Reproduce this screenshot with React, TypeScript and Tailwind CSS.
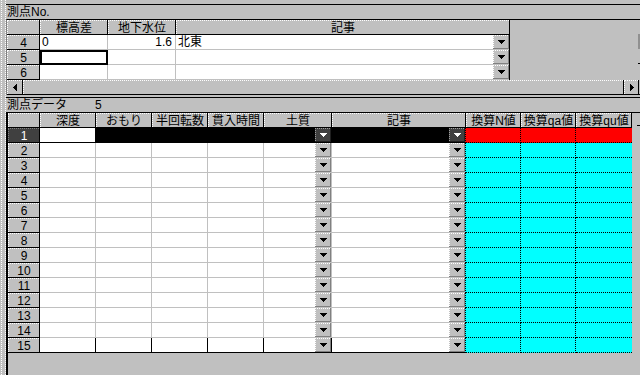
const FONT = "font-['Liberation_Sans','Noto_Sans_CJK_JP',sans-serif]";

function DownArrow({ light }: { light?: boolean }) {
  const c = light ? "bg-white" : "bg-black";
  return (
    <div className="flex flex-col items-center">
      <div className={`h-px w-[7px] ${c}`} />
      <div className={`h-px w-[5px] ${c}`} />
      <div className={`h-px w-[3px] ${c}`} />
      <div className={`h-px w-px ${c}`} />
    </div>
  );
}

function SideArrow({ dir }: { dir: "left" | "right" }) {
  const bars = ["h-px", "h-[3px]", "h-[5px]", "h-[7px]"];
  const list = dir === "left" ? bars : [...bars].reverse();
  return (
    <div className="flex items-center">
      {list.map(h => <div key={h} className={`w-px ${h} bg-black`} />)}
    </div>
  );
}

function DropBtn({ dark }: { dark?: boolean }) {
  return (
    <div className={`w-[16px] h-full border-r border-b ${dark ? "bg-[#404040] border-[#202020]" : "bg-[#c0c0c0] border-[#808080]"}`}>
      <div className={`h-full border-t border-l border-dotted ${dark ? "border-[#a0a0a0]" : "border-white"} flex items-center justify-center`}>
        <DownArrow light={dark} />
      </div>
    </div>
  );
}

function HeadCell({ w, children, noRight }: { w: string; children?: React.ReactNode; noRight?: boolean }) {
  return (
    <div className={`${w} h-full ${noRight ? "" : "border-r"} border-b border-black bg-[#c0c0c0]`}>
      <div className="h-full border-t border-l border-dotted border-white flex items-center justify-center whitespace-nowrap overflow-hidden">
        {children}
      </div>
    </div>
  );
}

function RowHead({ label, w, sel }: { label?: string | number; w: string; sel?: boolean }) {
  return (
    <div className={`${w} h-full border-r border-b border-black ${sel ? "bg-[#404040] text-white" : "bg-[#c0c0c0]"}`}>
      <div className={`h-full border-t border-l border-dotted ${sel ? "border-[#808080]" : "border-white"} flex items-center justify-center`}>
        {label}
      </div>
    </div>
  );
}

const COLS2 = [
  { label: "深度", w: "w-[56px]" },
  { label: "おもり", w: "w-[56px]" },
  { label: "半回転数", w: "w-[56px]" },
  { label: "貫入時間", w: "w-[56px]" },
  { label: "土質", w: "w-[68px]" },
  { label: "記事", w: "w-[134px]" },
  { label: "換算N値", w: "w-[55px]" },
  { label: "換算qa値", w: "w-[55px]" },
  { label: "換算qu値", w: "w-[56px]" },
];

function DataRow({ n, sel, last }: { n: number; sel?: boolean; last?: boolean }) {
  const line = last ? "border-black" : "border-[#c0c0c0]";
  const cell = sel ? "bg-black border-black" : `bg-white ${line}`;
  const calc = sel ? "bg-[#ff0000]" : "bg-[#00ffff]";
  return (
    <div className="flex h-[15px]">
      <RowHead label={n} w="w-[32px]" sel={sel} />
      <div className={`w-[56px] border-r border-b bg-white ${sel ? "border-black" : line}`} />
      <div className={`w-[56px] border-r border-b ${cell}`} />
      <div className={`w-[56px] border-r border-b ${cell}`} />
      <div className={`w-[56px] border-r border-b ${cell}`} />
      <div className={`w-[68px] flex border-r border-b ${cell}`}>
        <div className="flex-1" />
        <DropBtn dark={sel} />
      </div>
      <div className={`w-[133px] flex border-b ${cell}`}>
        <div className="flex-1" />
        <DropBtn dark={sel} />
      </div>
      <div className={`w-[56px] border-l border-r border-b border-dotted border-black ${calc}`} />
      <div className={`w-[55px] border-r border-b border-dotted border-black ${calc}`} />
      <div className={`w-[56px] border-b border-dotted border-black ${calc}`} />
    </div>
  );
}

function TopRow({ n, a, b, note, focus }: { n: number; a?: string; b?: string; note?: string; focus?: boolean }) {
  return (
    <div className="flex h-[15px]">
      <RowHead label={n} w="w-[33px]" />
      <div className={`w-[68px] bg-white pl-[2px] flex items-center ${focus ? "border-2 border-black" : "border-r border-b border-[#c0c0c0]"}`}>{a}</div>
      <div className="w-[68px] bg-white border-r border-b border-[#c0c0c0] pr-[3px] flex items-center justify-end">{b}</div>
      <div className="w-[333px] bg-white border-b border-[#c0c0c0] flex">
        <div className="flex-1 pl-[2px] flex items-center">{note}</div>
        <DropBtn />
      </div>
    </div>
  );
}

export default function App() {
  return (
    <div className={`w-[640px] h-[375px] overflow-hidden bg-[#c0c0c0] flex text-[12px] leading-[14px] text-black ${FONT}`}>
      {/* splitter strip */}
      <div className="w-[6px] h-full pl-px">
        <div className="h-full w-[5px] border-l border-r border-dotted border-white" />
      </div>

      <div className="w-[634px] h-full flex flex-col">
        <div className="h-[4px]" />
        <div className="h-[15px] border-t border-black pl-px flex items-center">測点No.</div>

        {/* 測点 grid */}
        <div className="border-t border-t-black border-l border-l-[#808080] flex flex-col">
          <div className="flex">
            <div className="flex flex-col border-r border-black">
              <div className="flex h-[15px]">
                <RowHead w="w-[33px]" />
                <HeadCell w="w-[68px]">標高差</HeadCell>
                <HeadCell w="w-[68px]">地下水位</HeadCell>
                <HeadCell w="w-[333px]" noRight>記事</HeadCell>
              </div>
              <TopRow n={4} a="0" b="1.6" note="北東" />
              <TopRow n={5} focus />
              <TopRow n={6} />
            </div>
            <div className="flex-1 flex flex-col items-end">
              <div className="mt-[14px] w-[2px] h-[15px] bg-[#909090]" />
              <div className="mt-[14px] w-[2px] h-px bg-black" />
            </div>
          </div>
          {/* horizontal scrollbar */}
          <div className="flex h-[15px] border-b border-black">
            <div className="w-[16px] h-full border-r border-black">
              <div className="h-full border-t border-l border-dotted border-white flex items-center justify-center">
                <SideArrow dir="left" />
              </div>
            </div>
            <div className="flex-1 h-full border-t border-l border-dotted border-white" />
            <div className="w-[16px] h-full border-l border-r border-black">
              <div className="h-full border-t border-l border-dotted border-white flex items-center justify-center">
                <SideArrow dir="right" />
              </div>
            </div>
            <div className="w-px" />
          </div>
        </div>

        <div className="h-[2px]" />
        <div className="h-[15px] border-t border-black pl-px flex items-center">
          <span className="w-[88px]">測点データ</span>
          <span>5</span>
        </div>

        {/* 測点データ grid */}
        <div className="flex-1 border-t border-t-black border-l-2 border-l-black flex">
          <div className="flex flex-col">
            <div className="flex h-[15px]">
              <RowHead w="w-[32px]" />
              {COLS2.map(c => <HeadCell key={c.label} w={c.w}>{c.label}</HeadCell>)}
            </div>
            {Array.from({ length: 15 }, (_, i) => (
              <DataRow key={i} n={i + 1} sel={i === 0} last={i === 14} />
            ))}
          </div>
          <div className="flex-1 flex flex-col items-end">
            <div className="mt-[12px] w-[3px] h-px bg-black" />
          </div>
        </div>
      </div>
    </div>
  );
}
